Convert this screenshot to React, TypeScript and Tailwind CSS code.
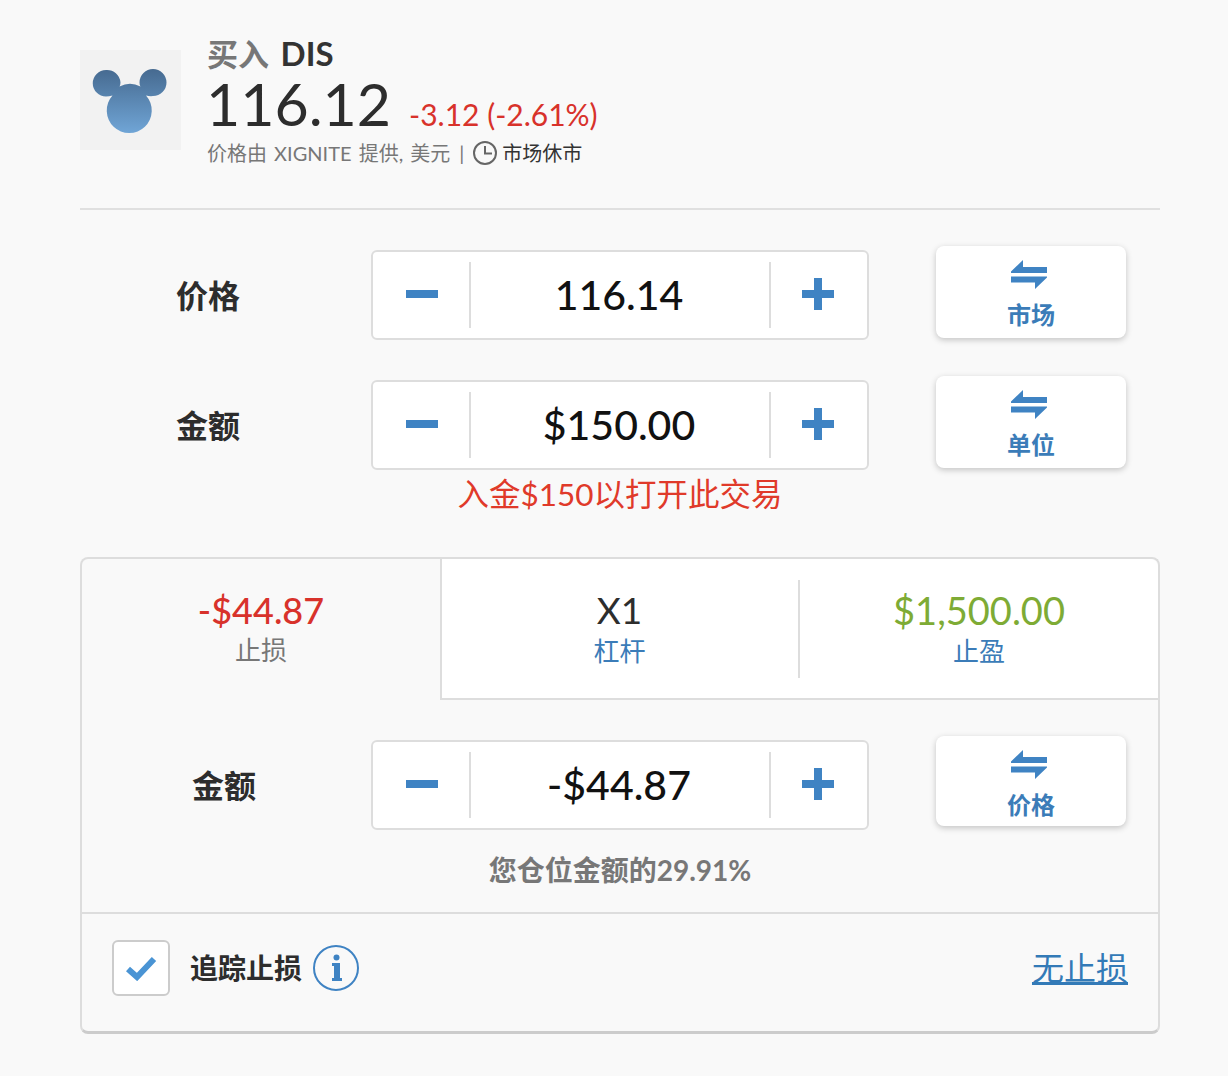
function SwapIcon() {
  return (
    <svg className="mr-[4px]" width="36" height="29" viewBox="0 0 36 29" fill="#3f83c3">
      <path d="M12 0V7H36V13H0V11.6Z" />
      <path d="M0 16.5H36V17.5L24 29V22.5H0Z" />
    </svg>
  );
}

function Stepper({ value }: { value: string }) {
  return (
    <div className="flex h-[90px] w-[498px] items-center rounded-md border-2 border-[#dddddd] bg-white">
      <div className="flex h-[66px] w-[98px] items-center justify-center border-r-2 border-[#dddddd] pb-[2px] pl-[2px]">
        <div className="h-2 w-8 bg-[#3f83c3]" />
      </div>
      <div className="flex-1 pr-[2px] pb-[2px] text-center text-[41px] leading-none font-medium text-[#111111]">{value}</div>
      <div className="flex h-[66px] w-[98px] items-center justify-center border-l-2 border-[#dddddd] pr-[2px] pb-[2px]">
        <svg width="32" height="32" viewBox="0 0 32 32" fill="#3f83c3">
          <path d="M12 0H20V12H32V20H20V32H12V20H0V12H12Z" />
        </svg>
      </div>
    </div>
  );
}

function SideButton({ label, short }: { label: string; short?: boolean }) {
  return (
    <div
      className={`flex w-[190px] flex-col items-center rounded-lg bg-white pt-[14px] shadow-[0_2px_6px_rgba(0,0,0,0.22)] ${
        short ? 'h-[90px]' : 'h-[92px]'
      }`}
    >
      <SwapIcon />
      <div className="mt-[8px] text-[24px] leading-[36px] font-bold text-[#3b7cb8]">{label}</div>
    </div>
  );
}

function Logo() {
  return (
    <div className="h-[100px] w-[101px] shrink-0 bg-[#f2f2f2]">
      <svg width="101" height="100" viewBox="0 0 101 100">
        <defs>
          <linearGradient id="mouse" x1="0" y1="0" x2="0" y2="1">
            <stop offset="0" stopColor="#466a90" />
            <stop offset="1" stopColor="#70a5d6" />
          </linearGradient>
        </defs>
        <path
          fill="url(#mouse)"
          d="M26 20a13 13 0 1 0 0 26.500q3 0 6.500-1a22.500 22.500 0 1 0 33.500 0q4 1 7 .5a13.500 13.500 0 1 0-13.500-13.500q0 3 1 4a22.500 22.500 0 0 0-21 0q1-2 1-4a13.500 13.500 0 0 0-14.500-12.500Z"
        />
      </svg>
    </div>
  );
}

export default function App() {
  return (
    <div
      className="min-h-[1076px] w-[1228px] bg-[#f9f9f9] pt-[50px] pr-[68px] pl-[80px] text-[#2d2d2d]"
      style={{ fontFamily: 'Lato, "Noto Sans CJK SC", sans-serif' }}
    >
      {/* Header */}
      <div className="flex h-[160px] items-start gap-[26px] border-b-2 border-[#e0e0e0]">
        <Logo />
        <div className="-mt-[15px]">
          <div className="text-[31px] leading-[36px] font-bold text-[#777777]">
            买入 <span className="ml-[4px] text-[33px] text-[#333333]">DIS</span>
          </div>
          <div className="flex h-[63px] items-center">
            <span className="-ml-[1px] text-[59px] leading-none text-[#2d2d2d]">116.12</span>
            <span className="mt-[20px] ml-[18px] text-[30px] leading-none text-[#d8322b]">-3.12 (-2.61%)</span>
          </div>
          <div className="mt-[3px] flex items-center text-[20px] leading-[30px] text-[#777777]">
            <span className="[word-spacing:2px]">价格由 XIGNITE 提供, 美元</span>
            <span className="mx-[9px]">|</span>
            <svg width="24" height="24" viewBox="0 0 24 24" fill="none" stroke="#666666" strokeWidth="2">
              <circle cx="12" cy="12" r="11" />
              <path d="M12 5V12.500H19" />
            </svg>
            <span className="ml-[5px] text-[#333333]">市场休市</span>
          </div>
        </div>
      </div>

      {/* Price */}
      <div className="mt-[40px] flex items-start">
        <div className="flex h-[92px] w-[291px] items-center pl-[96px] text-[32px] font-bold">价格</div>
        <Stepper value="116.14" />
        <div className="-mt-1 ml-[67px]">
          <SideButton label="市场" />
        </div>
      </div>

      {/* Amount */}
      <div className="mt-[38px] flex items-start">
        <div className="flex h-[92px] w-[291px] items-center pl-[96px] text-[32px] font-bold">金额</div>
        <Stepper value="$150.00" />
        <div className="-mt-1 ml-[67px]">
          <SideButton label="单位" />
        </div>
      </div>
      <div className="-mt-[1px] ml-[291px] w-[498px] text-center text-[31.5px] leading-[46px] text-[#e03a2a]">
        入金$150以打开此交易
      </div>

      {/* Stop loss panel */}
      <div className="mt-[40px] h-[477px] rounded-lg border-2 border-b-[3px] border-[#dddddd] border-b-[#cccccc]">
        <div className="flex h-[141px] rounded-t-lg">
          <div className="w-[360px] border-r-2 border-[#dddddd] pt-[29px] text-center">
            <div className="text-[36px] leading-[44px] font-medium text-[#d8322b]">-$44.87</div>
            <div className="-mt-[1px] text-[26px] leading-[38px] text-[#777777]">止损</div>
          </div>
          <div className="flex flex-1 items-center rounded-tr-lg border-b-2 border-[#dddddd] bg-white">
            <div className="w-[358px] border-r-2 border-[#dddddd] py-[8px] pr-[1px] text-center">
              <div className="text-[37px] leading-[44px] text-[#2d2d2d]">X1</div>
              <div className="text-[26px] leading-[38px] text-[#3b7cb8]">杠杆</div>
            </div>
            <div className="flex-1 py-[8px] text-center">
              <div className="text-[38px] leading-[44px] text-[#7eab35]">$1,500.00</div>
              <div className="text-[26px] leading-[38px] text-[#3b7cb8]">止盈</div>
            </div>
          </div>
        </div>

        <div className="mt-[40px] flex items-start">
          <div className="flex h-[92px] w-[289px] items-center pl-[110px] text-[32px] font-bold">金额</div>
          <Stepper value="-$44.87" />
          <div className="-mt-1 ml-[67px]">
            <SideButton label="价格" short />
          </div>
        </div>

        <div className="ml-[289px] w-[498px] pt-[18px] text-center text-[28px] leading-[40px] font-bold text-[#777777]">
          您仓位金额的29.91%
        </div>

        <div className="mt-[22px] flex h-[110px] items-center justify-between border-t-2 border-[#dddddd] px-[30px]">
          <div className="flex items-center">
            <div className="flex h-[56px] w-[58px] items-center justify-center rounded-md border-2 border-[#cccccc] bg-white">
              <svg className="blur-[0.5px]" width="32" height="26" viewBox="0 0 32 26" fill="none" stroke="#4a94d4" strokeWidth="6">
                <path d="M3 14L12 22L29 4" />
              </svg>
            </div>
            <span className="ml-[20px] text-[28px] font-bold">追踪止损</span>
            <svg className="ml-[11px]" width="46" height="46" viewBox="0 0 46 46">
              <circle cx="23" cy="23" r="22" fill="none" stroke="#3f83c3" strokeWidth="2" />
              <circle cx="23.500" cy="12.500" r="3" fill="#3f83c3" />
              <path fill="#3f83c3" d="M19 18H27V33H29V36H19V33H21V21H19Z" />
            </svg>
          </div>
          <span className="text-[32px] text-[#337ab7] underline">无止损</span>
        </div>
      </div>
    </div>
  );
}
